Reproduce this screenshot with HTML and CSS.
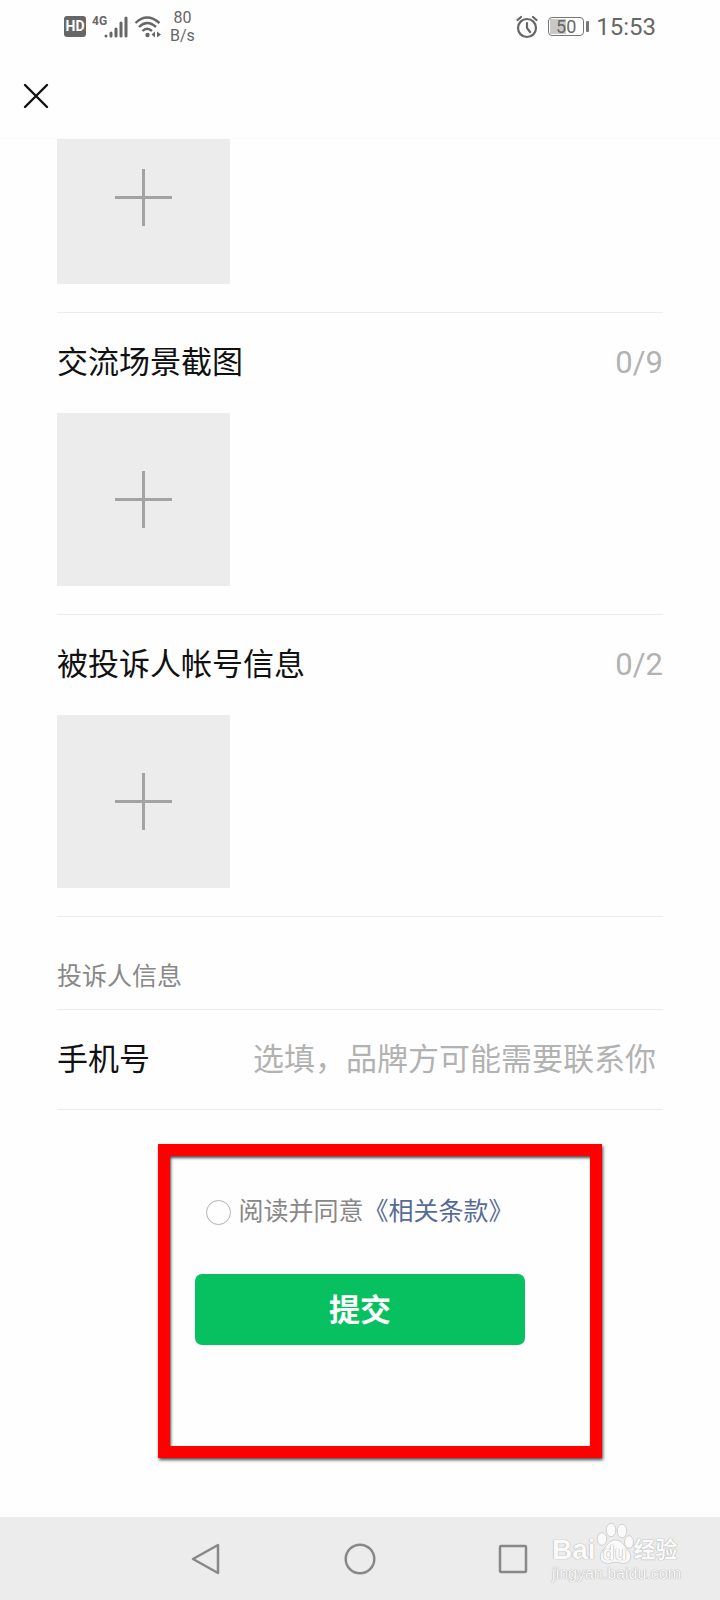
FILE: index.html
```
<!DOCTYPE html>
<html lang="zh-CN">
<head>
    <meta charset="UTF-8">
    <meta name="viewport" content="width=device-width, initial-scale=1.0">
    <title>投诉</title>
    <link rel="stylesheet" href="styles.css">
</head>
<body>
    <header class="top">
        <div class="status-bar">
            <div class="status-left">
                <span class="hd">HD</span>
                <span class="network">4G</span>
                <svg class="signal" width="24" height="22" viewBox="0 0 24 22" fill="none" stroke="#666" stroke-width="3" stroke-linecap="round">
                    <path d="M2 20v0M7 20v-3M12 20v-7M17 20V7M22 20V2"/>
                </svg>
                <svg class="wifi" width="28" height="24" viewBox="0 0 28 24" fill="none" stroke="#666" stroke-width="2.4">
                    <path d="M1.5 8Q13 -3 25.500 8M5 12Q13 4 22 12M8.500 16Q13 11.500 18 16"/>
                    <circle cx="13.500" cy="20" r="2.200" fill="#666" stroke="none"/>
                    <path d="M21 16.500v6l-3.500-3zM23 16.500v6l4-3z" fill="#666" stroke="none"/>
                </svg>
                <span class="speed">80<br>B/s</span>
            </div>
            <div class="status-right">
                <svg width="22" height="24" viewBox="0 0 22 24" fill="none" stroke="#666" stroke-width="2.2" stroke-linecap="round">
                    <circle cx="11" cy="13" r="9"/>
                    <path d="M11 8v5l3 4M1.500 5L5 2M20.500 5L17 2"/>
                </svg>
                <span class="battery"><span class="battery-level">50</span></span>
                <span class="clock">15:53</span>
            </div>
        </div>
        <div class="title-bar">
            <button class="close" type="button" aria-label="关闭">
                <svg width="26" height="26" viewBox="0 0 26 26" stroke="#111" stroke-width="2.4" stroke-linecap="round">
                    <path d="M2 2L24 24M24 2L2 24"/>
                </svg>
            </button>
        </div>
    </header>

    <main>
        <form class="form">
            <section class="upload scrolled">
                <button class="add" type="button" aria-label="添加图片"></button>
            </section>

            <section class="upload">
                <div class="row">
                    <h2>交流场景截图</h2>
                    <span class="count">0/9</span>
                </div>
                <button class="add" type="button" aria-label="添加交流场景截图"></button>
            </section>

            <section class="upload">
                <div class="row">
                    <h2>被投诉人帐号信息</h2>
                    <span class="count">0/2</span>
                </div>
                <button class="add" type="button" aria-label="添加被投诉人帐号信息"></button>
            </section>

            <h3 class="group-title">投诉人信息</h3>
            <div class="row phone">
                <label for="phone">手机号</label>
                <input type="tel" id="phone" placeholder="选填，品牌方可能需要联系你">
            </div>

            <div class="submit-area">
                <div class="agree">
                    <input type="radio" id="agree">
                    <label for="agree">阅读并同意</label><a href="#">《相关条款》</a>
                </div>
                <button class="submit" type="submit">提交</button>
                <div class="highlight"></div>
            </div>
        </form>
    </main>

    <footer class="nav-bar">
        <button type="button" aria-label="返回">
            <svg width="34" height="34" viewBox="0 0 34 34" fill="none" stroke="#888" stroke-width="2.5" stroke-linejoin="round">
                <path d="M28 3v28L3 17z"/>
            </svg>
        </button>
        <button type="button" aria-label="主页">
            <svg width="34" height="34" viewBox="0 0 34 34" fill="none" stroke="#888" stroke-width="2.5">
                <circle cx="17" cy="17" r="14.300"/>
            </svg>
        </button>
        <button type="button" aria-label="最近任务">
            <svg width="34" height="34" viewBox="0 0 34 34" fill="none" stroke="#888" stroke-width="2.5">
                <rect x="4" y="4" width="26" height="26" rx="1"/>
            </svg>
        </button>
        <div class="watermark">
            <div class="brand">
                <span>Bai</span>
                <span class="paw">
                    <svg width="38" height="42" viewBox="0 0 38 42" fill="#fafafa" stroke="#d0d0d0" stroke-width="1">
                        <ellipse cx="6" cy="17" rx="4.800" ry="6.300"/>
                        <ellipse cx="15" cy="8" rx="4.800" ry="6.800"/>
                        <ellipse cx="26" cy="9" rx="4.800" ry="6.800"/>
                        <ellipse cx="33" cy="20" rx="4.500" ry="6.300"/>
                        <path d="M19.500 18c5 0 7 3 10 7s6 6 5 11-6 6-10 5-6-1-10 0-9 0-10-5 2-7 5-11 5-7 10-7z"/>
                    </svg>
                    <span class="du">du</span>
                </span>
                <span class="jingyan">经验</span>
            </div>
            <div class="site">jingyan.baidu.com</div>
        </div>
    </footer>
</body>
</html>
```

FILE: styles.css
```
* {
    box-sizing: border-box;
}
body {
    margin: 0;
    min-height: 100vh;
    display: flex;
    flex-direction: column;
    background-color: #fefefe;
    color: #111;
    font-family: Roboto, "Noto Sans CJK SC", sans-serif;
    font-size: 31px;
    line-height: 40px;
}
main {
    flex: 1;
}
button {
    padding: 0;
    border: none;
    background: none;
    font-family: inherit;
    cursor: pointer;
}
svg {
    display: block;
}

/* status bar and title */
.top {
    position: relative;
    z-index: 1;
    background-color: #fefefe;
    border-bottom: 1px solid #fafafa;
}
.status-bar {
    display: flex;
    justify-content: space-between;
    align-items: center;
    height: 53px;
    padding: 0 64px;
    color: #666;
}
.status-left, .status-right {
    display: flex;
    align-items: center;
}
.hd {
    width: 22px;
    height: 21px;
    border-radius: 3px;
    background-color: #666;
    color: #fff;
    font-size: 14px;
    font-weight: bold;
    line-height: 21px;
    text-align: center;
}
.network {
    align-self: flex-start;
    width: 15px;
    margin-left: 6px;
    margin-top: 4px;
    font-size: 12px;
    font-weight: bold;
    line-height: 16px;
}
.signal {
    margin-left: -3px;
}
.wifi {
    margin-left: 6px;
}
.speed {
    margin-left: 8px;
    font-size: 16px;
    line-height: 18px;
    text-align: center;
}
.battery {
    position: relative;
    width: 36px;
    height: 19px;
    margin-left: 10px;
    margin-right: 12px;
    border: 1px solid #777;
    border-radius: 4px;
    padding: 1px;
}
.battery::after {
    content: "";
    position: absolute;
    left: 37px;
    top: 3px;
    width: 3px;
    height: 11px;
    border-radius: 1px;
    background-color: #777;
}
.battery-level {
    display: block;
    height: 15px;
    background: linear-gradient(to right, #c8c8c8 50%, transparent 50%);
    font-size: 18px;
    line-height: 15px;
    text-align: center;
}
.clock {
    font-size: 24px;
}
.title-bar {
    display: flex;
    align-items: center;
    height: 85px;
    padding: 0 23px;
}

/* form */
.form {
    padding: 0 57px;
}
.upload {
    padding-bottom: 28px;
    border-bottom: 1px solid #ececec;
}
.scrolled {
    margin-top: -28px;
}
.row {
    display: flex;
    justify-content: space-between;
    align-items: center;
    height: 100px;
}
h2, h3 {
    margin: 0;
    font-size: 31px;
    font-weight: normal;
}
.count {
    color: #b2b2b2;
}
.add {
    display: block;
    width: 173px;
    height: 173px;
    background:
        linear-gradient(#a3a3a3, #a3a3a3) center / 57px 3px no-repeat,
        linear-gradient(#a3a3a3, #a3a3a3) center / 3px 57px no-repeat,
        #ececec;
}
.group-title {
    padding: 40px 0 12px;
    border-bottom: 1px solid #ececec;
    color: #888;
    font-size: 25px;
}
.phone {
    border-bottom: 1px solid #ececec;
}
.phone label {
    width: 196px;
}
.phone input {
    flex: 1;
    min-width: 0;
    padding: 0;
    border: none;
    outline: none;
    background: none;
    font: inherit;
}
.phone input::placeholder {
    color: #b2b2b2;
}

/* agreement and submit */
.submit-area {
    position: relative;
    display: flex;
    flex-direction: column;
    align-items: center;
    gap: 42px;
    padding: 82px 0 120px;
}
.agree {
    display: flex;
    align-items: center;
    color: #888;
    font-size: 25px;
}
.agree input {
    appearance: none;
    width: 25px;
    height: 25px;
    margin: 0 7px 0 0;
    border: 1px solid #b2b2b2;
    border-radius: 50%;
}
.agree input:checked {
    border: 8px solid #07c160;
}
.agree a {
    color: #576b95;
    text-decoration: none;
}
.submit {
    width: 330px;
    height: 71px;
    padding-bottom: 4px;
    border-radius: 7px;
    background-color: #07c160;
    color: #fff;
    font-size: 31px;
    font-weight: bold;
}
.highlight {
    position: absolute;
    top: 34px;
    left: calc(50% - 202px);
    width: 444px;
    height: 314px;
    border: 12px solid #f00;
    box-shadow: 1px 2px 3px rgba(0, 0, 0, 0.7), inset 1px 2px 3px rgba(0, 0, 0, 0.7);
    pointer-events: none;
}

/* system navigation */
.nav-bar {
    position: relative;
    display: flex;
    justify-content: center;
    align-items: center;
    gap: 119px;
    height: 83px;
    background-color: #ececec;
}
.watermark {
    position: absolute;
    right: 39px;
    bottom: 16px;
    color: #fafafa;
    text-shadow: 0 0 1px #aaa, 0 0 1px #aaa;
}
.brand {
    display: flex;
    align-items: flex-end;
    font-family: "Liberation Sans", "Noto Sans CJK SC", sans-serif;
    font-size: 28px;
    font-weight: bold;
    line-height: 28px;
}
.paw {
    position: relative;
}
.du {
    position: absolute;
    left: 7px;
    bottom: 0;
    font-size: 20px;
    line-height: 22px;
}
.jingyan {
    font-size: 22px;
}
.site {
    font-family: "Liberation Sans", sans-serif;
    font-size: 16px;
    line-height: 20px;
}
```
